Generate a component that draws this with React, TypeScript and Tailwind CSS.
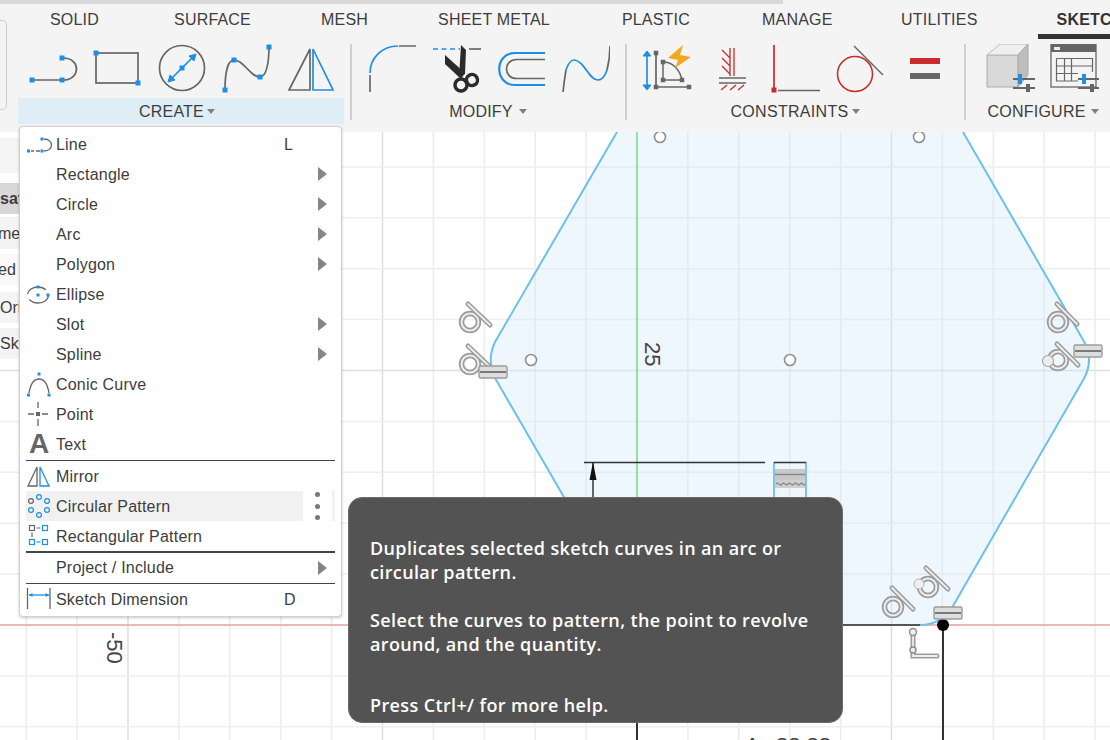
import React from "react";

const B = "#1e8fe6";
const G = "#666666";
const R = "#cc2b2b";
const FONT = "font-['Liberation_Sans',Arial,sans-serif]";

function Sq({ x, y, s = 4, c = B }: { x: number; y: number; s?: number; c?: string }) {
  return <rect x={x - s / 2} y={y - s / 2} width={s} height={s} fill={c} />;
}

function Icon({ x, children }: { x: number; children: React.ReactNode }) {
  return (
    <svg className="w-[52px] h-[52px] shrink-0" viewBox={`${x} 44 52 52`} fill="none">
      {children}
    </svg>
  );
}

function Caret({ ml }: { ml: string }) {
  return <span className={`${ml} w-0 h-0 border-l-[4.5px] border-r-[4.5px] border-t-[5px] border-l-transparent border-r-transparent border-t-[#808080]`} />;
}

function Tabs() {
  return (
    <div className="flex h-[35px] mb-[5px] items-start text-[16px] leading-[20px] tracking-[0.2px] text-[#3d3d3d] whitespace-nowrap">
      <div className="h-[35px] pt-[6px] pl-[50px]">SOLID</div>
      <div className="h-[35px] pt-[6px] ml-[75px]">SURFACE</div>
      <div className="h-[35px] pt-[6px] ml-[70px]">MESH</div>
      <div className="h-[35px] pt-[6px] ml-[70px]">SHEET METAL</div>
      <div className="h-[35px] pt-[6px] ml-[72px]">PLASTIC</div>
      <div className="h-[35px] pt-[6px] ml-[72px]">MANAGE</div>
      <div className="h-[35px] pt-[6px] ml-[68.5px]">UTILITIES</div>
      <div className="h-[35px] pt-[6px] pl-[19px] ml-[60px] w-[90px] shrink-0 overflow-hidden border-b-[5px] border-[#333333] font-bold text-[#333333]">SKETCH</div>
    </div>
  );
}

function Label({ text, ml, pr, tint, track = "tracking-[0.2px]" }: { text: string; ml: string; pr?: string; tint?: boolean; track?: string }) {
  return (
    <div className={`mt-[2px] h-[26px] flex items-center justify-center text-[16px] text-[#3d3d3d] ${pr ?? ""} ${tint ? "bg-[#deedf6]" : ""}`}>
      <span className={`pt-[2px] ${track}`}>{text}</span>
      <Caret ml={ml} />
    </div>
  );
}

function Divider() {
  return <div className="w-[2px] h-[77px] -mt-px bg-[#cfcfcf] shrink-0" />;
}

function Toolbar() {
  return (
    <div className="h-[132px] bg-[#f4f4f4] shrink-0 relative">
      <div className="h-[4px] w-[783px] bg-[#d8d8d8]" />
      <Tabs />
      <div className="absolute left-0 top-[20px] w-[7px] h-[90px] border border-l-0 border-[#cccccc] rounded-r-[5px]" />
      <div className="flex pl-[18px] overflow-hidden">
        <div className="w-[326px] mr-[6px] shrink-0 flex flex-col">
          <div className="flex gap-[12px] h-[52px] pl-[10px]">
            <Icon x={28}>
              <path d="M33 80H61" stroke={G} strokeWidth="1.5" />
              <path d="M63 58C81 58 81 80 63 80" stroke={G} strokeWidth="1.7" />
              <Sq x={32} y={80} s={5} /><Sq x={62} y={80} s={5} /><Sq x={62} y={58} s={5} />
            </Icon>
            <Icon x={92}>
              <rect x="96" y="53" width="42" height="30" stroke={G} strokeWidth="1.7" />
              <Sq x={96} y={53} s={5} /><Sq x={138} y={83} s={5} />
            </Icon>
            <Icon x={156}>
              <circle cx="182" cy="68" r="22.5" stroke={G} strokeWidth="1.7" />
              <path d="M171 79L193 57" stroke={B} strokeWidth="1.7" />
              <path d="M168 82L175 80L170 75Z" fill={B} stroke={B} />
              <path d="M196 54L189 56L194 61Z" fill={B} stroke={B} />
              <Sq x={182} y={68} s={5} />
            </Icon>
            <Icon x={220}>
              <path d="M225 90C225 72 228 60 234 60C244 60 250 77 260 77C266 77 269 64 269 47" stroke={G} strokeWidth="1.7" />
              <Sq x={225} y={90} s={5} /><Sq x={234} y={60} s={5} /><Sq x={260} y={77} s={5} /><Sq x={269} y={47} s={5} />
            </Icon>
            <Icon x={284}>
              <path d="M289 90L310 49V90Z" stroke={G} strokeWidth="1.7" />
              <path d="M313 49L333 90H313Z" stroke={B} strokeWidth="1.7" />
            </Icon>
          </div>
          <Label text="CREATE" ml="ml-[3px]" pr="pr-[8px]" tint />
        </div>
        <Divider />
        <div className="w-[273px] shrink-0 flex flex-col">
          <div className="flex gap-[12px] h-[52px] pl-[14px]">
            <Icon x={366}>
              <path d="M370 73C370 58 382 46 398 46" stroke={B} strokeWidth="1.7" />
              <path d="M399 46H416M370 75V92" stroke={G} strokeWidth="1.7" />
            </Icon>
            <Icon x={430}>
              <path d="M433 49H460" stroke={B} strokeWidth="1.7" strokeDasharray="5 3.5" />
              <path d="M469 49H481" stroke={G} strokeWidth="1.7" />
              <path d="M445 55L465 73L461 79L445 64Z" fill="#2b2b2b" />
              <path d="M461 45L466 50L465 74L459 77Z" fill="#2b2b2b" />
              <circle cx="461" cy="85" r="6" stroke="#2b2b2b" strokeWidth="3.5" />
              <circle cx="472" cy="80" r="5.5" stroke="#2b2b2b" strokeWidth="3.5" transform="rotate(-30 472 80)" />
            </Icon>
            <Icon x={494}>
              <path d="M545 53H515C494 53 494 85 515 85H545" stroke={B} strokeWidth="2.2" />
              <path d="M545 59.5H517C503 59.5 503 78.5 517 78.5H545" stroke={G} strokeWidth="1.7" />
            </Icon>
            <Icon x={558}>
              <path d="M563 92C564 82 565 76 566 70" stroke={G} strokeWidth="1.7" />
              <path d="M566 70C568 64 570 60 574 60C584 60 589 80 598 80C602 80 605 76 607 70" stroke={B} strokeWidth="1.7" />
              <path d="M607 70C609 62 610 55 610 46" stroke={G} strokeWidth="1.7" />
            </Icon>
          </div>
          <Label text="MODIFY" ml="ml-[6px]" pr="pr-[1px]" />
        </div>
        <Divider />
        <div className="w-[337px] shrink-0 flex flex-col">
          <div className="flex gap-[13px] h-[52px] pl-[13px]">
            <Icon x={640}>
              <path d="M647 53V88" stroke={B} strokeWidth="1.7" />
              <path d="M643 56L647 51L651 56ZM643 85L647 90L651 85Z" fill={B} stroke={B} />
              <path d="M656 53V87H689" stroke={G} strokeWidth="1.7" />
              <Sq x={656} y={53} s={4.5} c={G} /><Sq x={656} y={87} s={4.5} c={G} /><Sq x={689} y={87} s={4.5} c={G} />
              <path d="M663 62V80H682M663 62C673 62 680 70 682 80" stroke={G} strokeWidth="1.5" />
              <Sq x={663} y={62} s={4.5} c={G} /><Sq x={663} y={80} s={4.5} c={G} /><Sq x={682} y={80} s={4.5} c={G} />
              <path d="M683 45L668 58L678 60L675 68L691 57L680 55Z" fill="#f6a81c" />
            </Icon>
            <Icon x={705}>
              <path d="M730 48V76M734 48V76" stroke={R} strokeWidth="1.3" />
              <path d="M722 50L730 58M722 58L730 66M722 66L730 74" stroke={R} strokeWidth="1.3" />
              <path d="M719 78H746" stroke={G} strokeWidth="1.5" />
              <path d="M719 83H746" stroke={G} strokeWidth="1.5" />
              <path d="M721 90L727 85M730 90L736 85M738 90L744 85" stroke={R} strokeWidth="1.3" />
            </Icon>
            <Icon x={770}>
              <path d="M774 45V88" stroke={R} strokeWidth="1.7" />
              <Sq x={774} y={90} s={5} c={R} />
              <path d="M778 90.5H820" stroke={G} strokeWidth="1.5" />
            </Icon>
            <Icon x={835}>
              <circle cx="855" cy="74" r="17.5" stroke={R} strokeWidth="1.5" />
              <path d="M854 46L883 75" stroke={G} strokeWidth="1.5" />
            </Icon>
            <Icon x={900}>
              <rect x="910" y="58" width="30" height="6" fill={R} />
              <rect x="910" y="73" width="30" height="6" fill={G} />
            </Icon>
          </div>
          <Label text="CONSTRAINTS" ml="ml-[4px]" track="tracking-[0.3px]" />
        </div>
        <Divider />
        <div className="w-[154px] shrink-0 flex flex-col">
          <div className="flex gap-[12px] h-[52px] pl-[18px]">
            <Icon x={984}>
              <path d="M987 55H1018V87H987Z" fill="#d9d9d9" stroke="#aaaaaa" />
              <path d="M987 55L1000 44H1028L1018 55Z" fill="#efefef" stroke="#bbbbbb" />
              <path d="M1018 55L1028 44V75L1018 87Z" fill="#bdbdbd" stroke="#aaaaaa" />
              <path d="M1013 79H1035M1013 88H1035" stroke={G} strokeWidth="2" />
              <rect x="1018" y="74" width="4" height="10" fill={B} />
              <rect x="1026" y="84" width="4" height="8" fill={G} />
            </Icon>
            <Icon x={1048}>
              <rect x="1051" y="44" width="45" height="43" fill="#f4f4f4" stroke={G} strokeWidth="1.3" />
              <rect x="1051" y="44" width="45" height="8" fill={G} />
              <rect x="1054" y="47" width="6" height="3" fill="#eeeeee" />
              <path d="M1056.5 58.5H1092.5V72M1056.5 58.5V81H1078M1056.5 66H1092.5M1056.5 73.5H1078M1064.5 58.5V81M1071.5 58.5V81" stroke={G} strokeWidth="1.2" />
              <path d="M1078 79H1099M1078 88H1099" stroke={G} strokeWidth="2" />
              <rect x="1082" y="74" width="4" height="10" fill={B} />
              <rect x="1090" y="84" width="4" height="8" fill={G} />
            </Icon>
          </div>
          <Label text="CONFIGURE" ml="ml-[5px]" track="tracking-[0.25px]" />
        </div>
      </div>
    </div>
  );
}

function Tangent({ cx, cy, lx1, ly1, lx2, ly2 }: { cx: number; cy: number; lx1: number; ly1: number; lx2: number; ly2: number }) {
  return (
    <g filter="url(#soft)">
      <circle cx={cx} cy={cy} r="8.5" fill="none" stroke="#9c9c9c" strokeWidth="5.5" />
      <circle cx={cx} cy={cy} r="8.5" fill="none" stroke="#eeeeee" strokeWidth="2" />
      <path d={`M${lx1} ${ly1}L${lx2} ${ly2}`} stroke="#9c9c9c" strokeWidth="5" strokeLinecap="round" />
      <path d={`M${lx1} ${ly1}L${lx2} ${ly2}`} stroke="#eeeeee" strokeWidth="1.8" strokeLinecap="round" />
    </g>
  );
}

function Equal({ x, y }: { x: number; y: number }) {
  return (
    <g filter="url(#soft)">
      <rect x={x} y={y} width="28" height="12" rx="1.5" fill="#dddddd" stroke="#9c9c9c" strokeWidth="1.4" />
      <path d={`M${x + 1} ${y + 6}H${x + 27}`} stroke="#6f6f6f" strokeWidth="1.8" />
    </g>
  );
}

function Canvas() {
  const vs: number[] = [];
  for (let k = -12; k <= 9; k++) vs.push(k);
  const hs: number[] = [];
  for (let k = -2; k <= 10; k++) hs.push(k);
  const edge =
    "M617 132L495 342Q486.5 360 495 378L627 606Q638 625 660 625L920 625Q942 625 953 606L1082 382Q1096 360 1082 338L963 132Z";
  return (
    <svg className="absolute inset-0 w-full h-full" viewBox="0 132 1110 608">
      <defs>
        <filter id="soft" x="-20%" y="-20%" width="140%" height="140%">
          <feGaussianBlur stdDeviation="0.45" />
        </filter>
      </defs>
      {vs.map((k) => (
        <line key={k} x1={637 + 50.9 * k} x2={637 + 50.9 * k} y1="132" y2="740" stroke={k % 5 === 0 ? "#dddddd" : "#ececec"} strokeWidth="1.5" />
      ))}
      {hs.map((k) => (
        <line key={k} x1="0" x2="1110" y1={625 - 50.9 * k} y2={625 - 50.9 * k} stroke={k % 5 === 0 ? "#e0e0e0" : "#eeeeee"} strokeWidth="1.5" />
      ))}
      <path d={edge} fill="#cfe9fb" fillOpacity="0.35" />
      <line x1="0" x2="1110" y1="625" y2="625" stroke="#eda6a6" strokeWidth="1.5" />
      <line x1="637" x2="637" y1="132" y2="625" stroke="#7fd98a" strokeWidth="1.5" />
      <path d="M617 132L495 342Q486.5 360 495 378L627 606" fill="none" stroke="#6cc0ea" strokeWidth="2" />
      <path d="M920 625Q942 625 953 606L1082 382Q1096 360 1082 338L963 132" fill="none" stroke="#6cc0ea" strokeWidth="2" />
      <line x1="842" x2="920" y1="625" y2="625" stroke="#555555" strokeWidth="2" />
      <line x1="637" x2="637" y1="700" y2="740" stroke="#111111" strokeWidth="1.7" />
      <line x1="943" x2="943" y1="625" y2="740" stroke="#111111" strokeWidth="1.7" />
      <circle cx="943" cy="625" r="6" fill="#000000" />

      {[[660, 137], [919, 137], [531, 360], [790, 360]].map(([x, y]) => (
        <circle key={x} cx={x} cy={y} r="5.5" fill="#ffffff" stroke="#8f8f8f" strokeWidth="1.6" />
      ))}

      <path d="M584 462.5H765" stroke="#333333" strokeWidth="1.5" />
      <path d="M593 462V497" stroke="#333333" strokeWidth="1.5" />
      <path d="M593 462L596.5 480H589.5Z" fill="#111111" />
      <path d="M774 462V497M806 462V497" stroke="#6cc0ea" strokeWidth="1.8" />
      <path d="M774 462.5H806" stroke="#333333" strokeWidth="1.5" />
      <g filter="url(#soft)">
        <rect x="775" y="469" width="30" height="11" fill="#c9c9c9" />
        <path d="M775 474.5H805" stroke="#8a8a8a" strokeWidth="1.5" />
        <rect x="775" y="480" width="30" height="8" fill="#cfcfcf" />
        <path d="M776 484C778 481 780 487 782 484C784 481 786 487 788 484C790 481 792 487 794 484C796 481 798 487 800 484C802 481 803 487 805 484" fill="none" stroke="#8a8a8a" strokeWidth="1.4" />
      </g>

      <Tangent cx={470} cy={322} lx1={468} ly1={304} lx2={490} ly2={325} />
      <Tangent cx={470} cy={364} lx1={468} ly1={346} lx2={490} ly2={367} />
      <Equal x={479} y={366} />
      <Tangent cx={1058} cy={322} lx1={1057} ly1={304} lx2={1077} ly2={324} />
      <Tangent cx={1058} cy={360} lx1={1057} ly1={344} lx2={1078} ly2={365} />
      <Equal x={1074} y={345} />
      <circle cx="1048" cy="361" r="5.5" fill="#eeeeee" stroke="#a8a8a8" strokeWidth="1.2" />
      <Tangent cx={893} cy={607} lx1={892} ly1={588} lx2={913} ly2={609} />
      <Tangent cx={928} cy={587} lx1={926} ly1={568} lx2={948} ly2={589} />
      <circle cx="919" cy="584" r="5" fill="#eeeeee" stroke="#b5b5b5" strokeWidth="1" />
      <Equal x={934} y={607} />
      <g filter="url(#soft)">
        <path d="M913 632V656H937" fill="none" stroke="#9c9c9c" strokeWidth="5" strokeLinecap="round" />
        <path d="M913 632V656H937" fill="none" stroke="#eeeeee" strokeWidth="1.8" strokeLinecap="round" />
        <circle cx="913" cy="632" r="3.5" fill="#eeeeee" stroke="#8c8c8c" strokeWidth="1.4" />
        <circle cx="913" cy="650" r="3" fill="#eeeeee" stroke="#8c8c8c" strokeWidth="1.4" />
      </g>

      <text transform="translate(645 342) rotate(90)" fontFamily="Liberation Sans" fontSize="22" fill="#444444">25</text>
      <text transform="translate(107 632) rotate(90)" fontFamily="Liberation Sans" fontSize="22" fill="#444444">-50</text>
      <text y="753" fontFamily="Liberation Sans" fontSize="22" fill="#444444">
        <tspan x="745">A</tspan>
        <tspan x="776">88.88</tspan>
      </text>
    </svg>
  );
}

function SidePanel() {
  const row = "h-[31px] flex items-center overflow-hidden whitespace-nowrap text-[16px] text-[#3d3d3d]";
  return (
    <div className="relative w-[19px] flex flex-col pt-[6px]">
      <div className="h-[35px] bg-[#f5f5f5] mb-[10px]" />
      <div className={`${row} bg-[#d8d8d8] font-bold mb-[4px]`}>sat</div>
      <div className={`${row} bg-[#f4f4f4] mb-[5px] -indent-[2px]`}>me</div>
      <div className={`${row} bg-[#fafafa] mb-[7px] -indent-[2px]`}>ed</div>
      <div className={`${row} bg-[#f4f4f4] mb-[5px]`}>Ori</div>
      <div className={`${row} bg-[#f4f4f4]`}>Sk</div>
    </div>
  );
}

function Arrow() {
  return <span className="ml-auto mr-[8px] w-0 h-0 border-y-[7px] border-y-transparent border-l-[9px] border-l-[#858585]" />;
}

function Item({ icon, label, arrow, shortcut, h = "h-[30px]", pt = "pt-[2px]" }: { icon?: React.ReactNode; label: string; arrow?: boolean; shortcut?: string; h?: string; pt?: string }) {
  return (
    <div className={`${h} flex items-center`}>
      <span className="w-[30px] h-[30px] shrink-0 flex items-center justify-start">{icon}</span>
      <span className={`${pt} whitespace-nowrap tracking-[0.2px]`}>{label}</span>
      {shortcut && <span className="ml-auto pt-[2px] w-[51px]">{shortcut}</span>}
      {arrow && <Arrow />}
    </div>
  );
}

function MI({ children }: { children: React.ReactNode }) {
  return <svg className="w-[30px] h-[30px]" viewBox="0 0 30 30" fill="none">{children}</svg>;
}

function Menu() {
  return (
    <div className={`absolute left-[19px] top-[126px] w-[323px] bg-white border border-[#cfcfcf] rounded-[4px] shadow-[0_1px_3px_rgba(0,0,0,0.2)] px-[6px] pt-[2px] pb-[2px] text-[16px] text-[#3d3d3d] ${FONT}`}>
      <Item label="Line" shortcut="L" icon={
        <MI>
          <path d="M5 22H8M10 22H14" stroke={G} strokeWidth="1.3" />
          <path d="M18 10C28 10 28 22 18 22" stroke={G} strokeWidth="1.3" />
          <Sq x={2.5} y={22} s={3} /><Sq x={16} y={22} s={3} /><Sq x={16} y={10} s={3} />
        </MI>
      } />
      <Item label="Rectangle" arrow />
      <Item label="Circle" arrow />
      <Item label="Arc" arrow />
      <Item label="Polygon" arrow />
      <Item label="Ellipse" icon={
        <MI>
          <ellipse cx="12" cy="16" rx="10.5" ry="8" stroke={G} strokeWidth="1.3" strokeDasharray="24 6 22" />
          <Sq x={12} y={8} s={3} /><Sq x={12} y={16} s={3} /><Sq x={22} y={16} s={3} />
        </MI>
      } />
      <Item label="Slot" arrow />
      <Item label="Spline" arrow />
      <Item label="Conic Curve" icon={
        <MI>
          <path d="M3 24C5 12 9 10 13 10C17 10 21 12 23 24" stroke={G} strokeWidth="1.3" />
          <Sq x={13} y={5} s={3} /><Sq x={2.5} y={26} s={3} /><Sq x={23} y={26} s={3} />
        </MI>
      } />
      <Item label="Point" icon={
        <MI>
          <path d="M2 15H8M16 15H22M12 3V9M12 20V27" stroke={G} strokeWidth="1.3" />
          <Sq x={12} y={15} s={4} c={G} />
        </MI>
      } />
      <Item label="Text" icon={<span className="w-[26px] text-center text-[28px] font-bold leading-none text-[#666666]">A</span>} />
      <div className="mt-px h-px bg-[#444444]" />
      <Item label="Mirror" icon={
        <MI>
          <path d="M2 25L11 6V25Z" stroke={G} strokeWidth="1.3" />
          <path d="M14 6L23 25H14Z" stroke={B} strokeWidth="1.3" />
        </MI>
      } />
      <div className="relative h-[30px] bg-[#f1f1f1]">
        <Item label="Circular Pattern" icon={
          <MI>
            <circle cx="5" cy="10" r="2.4" stroke={G} strokeWidth="1.2" />
            <circle cx="13" cy="6" r="2.4" stroke={B} strokeWidth="1.2" />
            <circle cx="21" cy="10" r="2.4" stroke={B} strokeWidth="1.2" />
            <circle cx="21" cy="19" r="2.4" stroke={B} strokeWidth="1.2" />
            <circle cx="13" cy="24" r="2.4" stroke={B} strokeWidth="1.2" />
            <circle cx="5" cy="19" r="2.4" stroke={B} strokeWidth="1.2" />
          </MI>
        } />
        <div className="absolute right-[3px] top-0 h-[30px] w-[29px] bg-white flex flex-col items-center justify-center gap-[6.5px]">
          <span className="w-[5px] h-[5px] rounded-full bg-[#777777]" />
          <span className="w-[5px] h-[5px] rounded-full bg-[#777777]" />
          <span className="w-[5px] h-[5px] rounded-full bg-[#777777]" />
        </div>
      </div>
      <Item label="Rectangular Pattern" icon={
        <MI>
          <rect x="3.5" y="4.5" width="5" height="5" stroke={G} strokeWidth="1.2" />
          <rect x="16.5" y="4.5" width="5" height="5" stroke={B} strokeWidth="1.2" />
          <rect x="3.5" y="18.5" width="5" height="5" stroke={B} strokeWidth="1.2" />
          <rect x="16.5" y="18.5" width="5" height="5" stroke={B} strokeWidth="1.2" />
          <path d="M10.5 7H14.5M6 11.5V16" stroke={G} strokeWidth="1.2" />
          <path d="M10.5 21H14.5" stroke={B} strokeWidth="1.2" />
        </MI>
      } />
      <div className="h-[2px] bg-[#444444]" />
      <Item label="Project / Include" arrow h="h-[29px]" pt="pt-0" />
      <div className="mt-px h-px bg-[#444444]" />
      <Item label="Sketch Dimension" shortcut="D" icon={
        <MI>
          <path d="M1.5 4V25M24 4V25" stroke={G} strokeWidth="1.3" />
          <path d="M3 11H23" stroke={B} strokeWidth="1.3" />
          <path d="M3 11L6.5 9V13ZM23 11L19.5 9V13Z" fill={B} />
        </MI>
      } />
    </div>
  );
}

function Tip() {
  return (
    <div className="absolute left-[348px] top-[497px] w-[495px] h-[226px] rounded-[14px] bg-[#535353] border border-[#6a6a6a] pl-[21px] pr-[20px] pt-[38px] text-[18px] leading-[24px] tracking-[0.37px] font-semibold text-white font-['Open_Sans',sans-serif]">
      <p className="mb-[24px]">Duplicates selected sketch curves in an arc or circular pattern.</p>
      <p className="mb-[37px]">Select the curves to pattern, the point to revolve around, and the quantity.</p>
      <p>Press Ctrl+/ for more help.</p>
    </div>
  );
}

export default function App() {
  return (
    <div className={`relative w-[1110px] h-[740px] overflow-hidden bg-white flex flex-col ${FONT}`}>
      <Toolbar />
      <div className="relative flex-1 overflow-hidden">
        <Canvas />
        <SidePanel />
      </div>
      <Menu />
      <Tip />
    </div>
  );
}
